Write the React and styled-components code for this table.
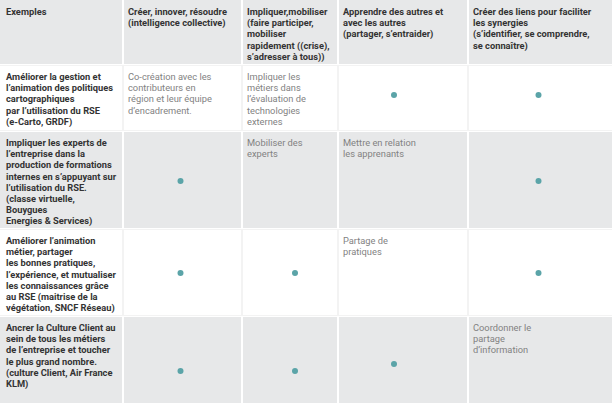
import React from "react";
import styled, { createGlobalStyle } from "styled-components";

const Global = createGlobalStyle`
  html, body { margin: 0; padding: 0; background: #fff; overflow: hidden; }
  body { font-family: Roboto, "Liberation Sans", sans-serif; }
`;

const Table = styled.div`
  display: flex;
  flex-direction: column;
  gap: 2px;
  width: 612px;
  background: #fff;
`;

const Row = styled.div`
  display: grid;
  grid-template-columns: 122px 117px 94px 128px 143px;
  column-gap: 2px;
  height: ${(p) => p.$h}px;
`;

const Cell = styled.div`
  background: ${(p) => (p.$shade ? "#e7e8e9" : "#fff")};
  box-shadow: ${(p) => (p.$shade ? "none" : "0 0 0 1px #f3f3f3")};
  padding: ${(p) => (p.$head ? "6px" : "5px")} 4px 0 ${(p) => (p.$first ? "6px" : "4px")};
  font-size: 9.3px;
  line-height: 11.2px;
  white-space: nowrap;
  overflow: hidden;
  color: ${(p) => (p.$bold ? "#333" : "#828282")};
  font-weight: ${(p) => (p.$bold ? 700 : 400)};
`;

const DotCell = styled.div`
  background: ${(p) => (p.$shade ? "#e7e8e9" : "#fff")};
  box-shadow: ${(p) => (p.$shade ? "none" : "0 0 0 1px #f3f3f3")};
  display: flex;
  align-items: center;
  justify-content: center;
`;

const Dot = styled.span`
  width: 6px;
  height: 6px;
  border-radius: 50%;
  background: #5ba4a8;
  transform: translate(${(p) => p.$dx || 0}px, ${(p) => p.$dy || 0}px);
`;

const dx = [0, -2.5, 5, -9, -2.5];

const Lines = ({ lines }) =>
  lines.map((l, i) => (
    <React.Fragment key={i}>
      {l}
      {i < lines.length - 1 && <br />}
    </React.Fragment>
  ));

const header = [
  ["Exemples"],
  ["Créer, innover, résoudre", "(intelligence collective)"],
  ["Impliquer,mobiliser", "(faire participer,", "mobiliser", "rapidement ((crise),", "s’adresser à tous))"],
  ["Apprendre des autres et", "avec les autres", "(partager, s’entraider)"],
  ["Créer des liens pour faciliter", "les synergies", "(s’identifier, se comprendre,", "se connaître)"],
];

const rows = [
  {
    h: 64,
    shade: false,
    dy: -3,
    cells: [
      ["Améliorer la gestion et", "l’animation des politiques", "cartographiques", "par l’utilisation du RSE", "(e-Carto, GRDF)"],
      ["Co-création avec les", "contributeurs en", "région et leur équipe", "d’encadrement."],
      ["Impliquer les", "métiers dans", "l’évaluation de", "technologies", "externes"],
      "dot",
      "dot",
    ],
  },
  {
    h: 96,
    shade: true,
    dy: 1,
    cells: [
      ["Impliquer les experts de", "l’entreprise dans la", "production de formations", "internes en s’appuyant sur", "l’utilisation du RSE.", "(classe virtuelle,", "Bouygues", "Energies & Services)"],
      "dot",
      ["Mobiliser des", "experts"],
      ["Mettre en relation", "les apprenants"],
      "dot",
    ],
  },
  {
    h: 85,
    shade: false,
    dy: 0,
    cells: [
      ["Améliorer l’animation", "métier, partager", "les bonnes pratiques,", "l’expérience, et mutualiser", "les connaissances grâce", "au RSE (maitrise de la", "végétation, SNCF Réseau)"],
      "dot",
      "dot",
      ["Partage de", "pratiques"],
      "dot",
    ],
  },
  {
    h: 86,
    shade: true,
    dy: 11,
    cells: [
      ["Ancrer la Culture Client au", "sein de tous les métiers", "de l’entreprise et toucher", "le plus grand nombre.", "(culture Client, Air France", "KLM)"],
      "dot",
      "dot",
      ["dot", -7],
      ["Coordonner le", "partage", "d’information"],
    ],
  },
];

export default function App() {
  return (
    <>
      <Global />
      <Table>
        <Row $h={64}>
          {header.map((lines, i) => (
            <Cell key={i} $shade $head $bold $first={i === 0}>
              <Lines lines={lines} />
            </Cell>
          ))}
        </Row>
        {rows.map((r, ri) => (
          <Row key={ri} $h={r.h}>
            {r.cells.map((c, ci) => {
              if (c === "dot" || (Array.isArray(c) && c[0] === "dot")) {
                const extra = Array.isArray(c) ? c[1] : 0;
                return (
                  <DotCell key={ci} $shade={r.shade}>
                    <Dot $dx={dx[ci]} $dy={r.dy + extra} />
                  </DotCell>
                );
              }
              return (
                <Cell key={ci} $shade={r.shade} $bold={ci === 0} $first={ci === 0}>
                  <Lines lines={c} />
                </Cell>
              );
            })}
          </Row>
        ))}
      </Table>
    </>
  );
}
